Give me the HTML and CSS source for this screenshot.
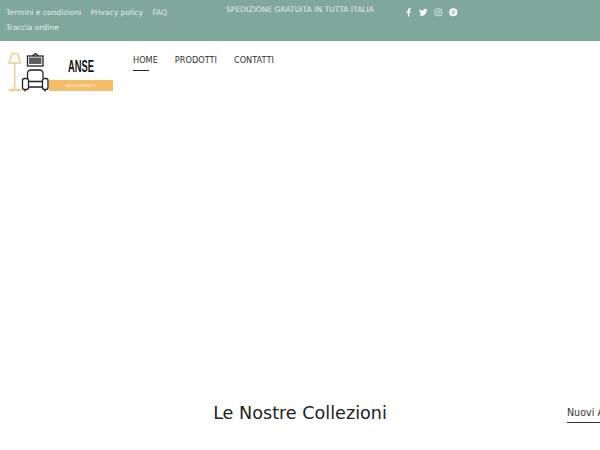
FILE: index.html
```html
<!DOCTYPE html>
<html lang="it">
<head>
    <meta charset="UTF-8">
    <meta name="viewport" content="width=device-width, initial-scale=1.0">
    <title>Anse Arredamento</title>
    <link rel="stylesheet" href="styles.css">
</head>
<body>
    <div class="topbar">
        <ul class="top-links">
            <li><a href="#">Termini e condizioni</a></li>
            <li><a href="#">Privacy policy</a></li>
            <li><a href="#">FAQ</a></li>
            <li><a href="#">Traccia ordine</a></li>
        </ul>
        <div class="top-message">SPEDIZIONE GRATUITA IN TUTTA ITALIA</div>
        <div class="top-social">
            <svg class="social-icon" viewBox="0 0 10 10"><path fill="currentColor" d="M6.200 10V5.600h1.400l.3-1.700H6.200v-1c0-.5.200-.8.900-.8h.9V.5C7.800.4 7.300.4 6.800.4 5.400.4 4.500 1.200 4.500 2.700v1.200H3v1.700h1.500V10z"/></svg>
            <svg class="social-icon" viewBox="0 0 10 10"><path fill="currentColor" d="M10 2.100c-.4.200-.8.300-1.200.3.400-.2.800-.6.900-1.100-.4.200-.9.400-1.300.5A2 2 0 0 0 4.900 3.600C3.200 3.500 1.700 2.700.7 1.500c-.5.900-.3 2.100.6 2.700-.3 0-.6-.1-.9-.2 0 1 .7 1.800 1.600 2-.3.100-.6.100-.9 0 .3.800 1 1.400 1.900 1.400A4 4 0 0 1 0 8.200a5.800 5.800 0 0 0 9-5.100c.4-.3.700-.6 1-1z"/></svg>
            <svg class="social-icon" viewBox="0 0 10 10"><rect x="1" y="1" width="8" height="8" rx="2.200" fill="none" stroke="currentColor" stroke-width=".8"/><circle cx="5" cy="5" r="1.800" fill="none" stroke="currentColor" stroke-width=".8"/><circle cx="7.300" cy="2.700" r=".5" fill="currentColor"/></svg>
            <svg class="social-icon" viewBox="0 0 10 10"><circle cx="5" cy="5" r="4.800" fill="currentColor"/><path fill="none" stroke="#7fa79b" stroke-width=".9" d="M3.500 5.600C2.700 4.400 3.500 2.700 5.200 2.700c1.500 0 2.200 1 2 2.200-.2 1.100-1 1.800-1.800 1.500-.6-.2-.7-.7-.6-1.200M5.200 3.900 4.200 8.300"/></svg>
        </div>
    </div>

    <header class="header">
        <a class="logo" href="#">
            <svg width="105" height="40" viewBox="0 0 105 40">
                <g fill="none" stroke="#f1cd92" stroke-width="1.500">
                    <path d="M4 1.500h5.500L12.500 11H1z"/>
                    <path d="M6.700 11v26"/>
                    <path fill="#f1cd92" d="M1.500 37.500h11v1H1.500z"/>
                </g>
                <g fill="none" stroke="#222" stroke-width="1.300">
                    <rect x="19.500" y="4" width="15.500" height="10"/>
                    <rect x="21.500" y="6" width="11.500" height="5.500" fill="#5c5c5c" stroke="#555" stroke-width=".8"/>
                    <path d="M24.500 4l3-2.500 3 2.500"/>
                    <path d="M19.500 26v-4.500a3.500 3.500 0 0 1 3.500-3.500h8.500a3.500 3.500 0 0 1 3.500 3.500V26"/>
                    <rect x="14.500" y="26.500" width="6" height="11" rx="2"/>
                    <rect x="34.500" y="26.500" width="5.500" height="11" rx="2"/>
                    <path d="M20.500 29.500h14M20.500 35h14M17 37.500v2M37 37.500v2"/>
                </g>
                <text class="logo-name" x="60" y="20" textLength="26" lengthAdjust="spacingAndGlyphs">ANSE</text>
                <rect x="41" y="28" width="64" height="11" fill="#f4bd68"/>
                <text class="logo-sub" x="58" y="35" textLength="30" lengthAdjust="spacing">ARREDAMENTO</text>
            </svg>
        </a>
        <nav class="nav">
            <a class="nav-link active" href="#">HOME</a>
            <a class="nav-link" href="#">PRODOTTI</a>
            <a class="nav-link" href="#">CONTATTI</a>
        </nav>
    </header>

    <div class="hero"></div>

    <section class="collections">
        <div></div>
        <h2>Le Nostre Collezioni</h2>
        <div class="tabs"><a class="tab active" href="#">Nuovi Arrivi</a></div>
    </section>
</body>
</html>
```

FILE: styles.css
```css
body {
    font-family: "DejaVu Sans", sans-serif;
    background-color: #fff;
    color: #222;
    margin: 0;
    padding: 0;
    height: 450px;
    overflow: hidden;
}

a {
    color: inherit;
    text-decoration: none;
}

.topbar {
    height: 41px;
    box-sizing: border-box;
    background-color: #7fa79b;
    color: #e4ecea;
    display: flex;
    align-items: flex-start;
    font-size: 7.600px;
}

.top-links {
    list-style: none;
    margin: 0;
    padding: 6px 0 0 6px;
    width: 200px;
    box-sizing: border-box;
    display: flex;
    flex-wrap: wrap;
    column-gap: 9.500px;
}

.top-links li {
    line-height: 14.500px;
}

.top-message {
    width: 200px;
    padding-top: 5px;
    text-align: center;
    line-height: 10px;
    white-space: nowrap;
}

.top-social {
    display: flex;
    gap: 6.500px;
    padding: 8px 0 0 4px;
    color: #fff;
}

.social-icon {
    width: 8.500px;
    height: 8.500px;
}

.header {
    display: flex;
    height: 70px;
    padding: 11px 0 0 8px;
    box-sizing: border-box;
}

.logo {
    display: block;
    height: 40px;
}

.logo-name {
    font-family: "Liberation Sans", sans-serif;
    font-size: 16.500px;
    font-weight: bold;
    fill: #111;
}

.logo-sub {
    font-family: "Liberation Sans", sans-serif;
    font-size: 3px;
    fill: #fff;
}

.nav {
    display: flex;
    gap: 17px;
    margin-left: 20px;
    font-size: 8.200px;
}

.nav-link {
    line-height: 16px;
    color: #333;
}

.nav-link.active::after {
    content: "";
    display: block;
    width: 16px;
    height: 1px;
    margin-top: 2px;
    background-color: #222;
}

.hero {
    height: 289px;
}

.collections {
    display: grid;
    grid-template-columns: 1fr auto 1fr;
    align-items: start;
}

.collections h2 {
    margin: 1px 0 0;
    font-size: 17.600px;
    font-weight: 400;
    line-height: 24px;
}

.tabs {
    padding: 1px 0 0 180px;
    white-space: nowrap;
    overflow: hidden;
}

.tab {
    display: inline-block;
    font-size: 9.600px;
    line-height: 12px;
    padding-bottom: 3px;
    color: #333;
    border-bottom: 1.500px solid #333;
}
```
